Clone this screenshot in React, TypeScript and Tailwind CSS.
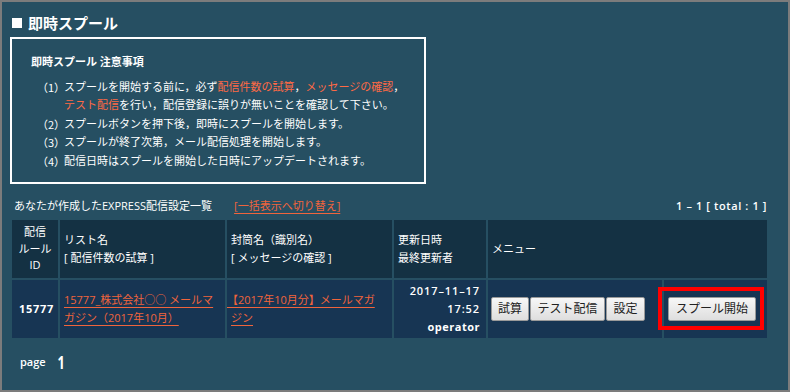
import React from "react";

const F = { fontFamily: '"Open Sans", "Noto Sans CJK JP", sans-serif' };

const R = ({ children }: { children: React.ReactNode }) => (
  <span className="text-[#ff6a45]">{children}</span>
);

const Btn = ({ children, className = "" }: { children: React.ReactNode; className?: string }) => (
  <div
    className={
      "h-[24px] flex items-center justify-center border border-[#9a9a9a] rounded-[2px] bg-gradient-to-b from-[#f7f7f7] to-[#dedede] text-[#222] text-[12px] leading-none " +
      className
    }
  >
    {children}
  </div>
);

export default function App() {
  const items: [string, React.ReactNode][] = [
    [
      "（1）",
      <>
        スプールを開始する前に，必ず<R>配信件数の試算</R>，<R>メッセージの確認</R>，
        <br />
        <R>テスト配信</R>を行い，配信登録に誤りが無いことを確認して下さい。
      </>,
    ],
    ["（2）", "スプールボタンを押下後，即時にスプールを開始します。"],
    ["（3）", "スプールが終了次第，メール配信処理を開始します。"],
    ["（4）", "配信日時はスプールを開始した日時にアップデートされます。"],
  ];
  const link = "text-[#f0643c] underline underline-offset-[3px] decoration-1";
  return (
    <div
      style={F}
      className="w-[790px] h-[392px] border-2 border-[#7c7c7c] bg-[#264f62] text-white text-[11px] flex flex-col"
    >
      <div className="pt-[11px] pl-[10px] h-[35px] flex items-start">
        <div className="h-[20px] flex items-center font-bold text-[15px] leading-[20px] gap-[6px]">
          <span className="w-[10px] h-[10px] bg-white inline-block"></span>
          <span>即時スプール</span>
        </div>
      </div>
      <div className="ml-[8px] w-[416px] h-[147px] border-2 border-white pl-[19px] pt-[14px]">
        <div className="font-bold leading-[18px]">即時スプール 注意事項</div>
        <div className="mt-[7px] pl-[6px]">
          {items.map(([n, t], i) => (
            <div key={i} className="flex leading-[18.4px]">
              <div className="w-[27px] shrink-0" style={{ fontFamily: '"Noto Sans CJK JP", sans-serif' }}>{n}</div>
              <div>{t}</div>
            </div>
          ))}
        </div>
      </div>
      <div className="mt-[13px] h-[18px] flex items-center pl-[12px] pr-[21px] leading-[18px]">
        <span>あなたが作成したEXPRESS配信設定一覧</span>
        <span className={"ml-[22px] " + link}>[一括表示へ切り替え]</span>
        <span className="ml-auto font-semibold tracking-[0.6px]">1 – 1 [ total : 1 ]</span>
      </div>
      <div className="mt-[5px] ml-[10px] grid grid-cols-[46px_165px_165px_92px_174px_103px] grid-rows-[58px_58px] gap-[2px] leading-[18px]">
        <div className="bg-[#143143] flex flex-col items-center justify-center leading-[16.5px]">
          <span>配信</span>
          <span>ルール</span>
          <span>ID</span>
        </div>
        <div className="bg-[#143143] flex flex-col justify-center pl-[4px]">
          <span>リスト名</span>
          <span>[ 配信件数の試算 ]</span>
        </div>
        <div className="bg-[#143143] flex flex-col justify-center pl-[4px]">
          <span>封筒名（識別名）</span>
          <span>[ メッセージの確認 ]</span>
        </div>
        <div className="bg-[#143143] flex flex-col justify-center pl-[4px]">
          <span>更新日時</span>
          <span>最終更新者</span>
        </div>
        <div className="col-span-2 bg-[#143143] flex items-center pl-[4px]">メニュー</div>

        <div className="bg-[#173553] flex items-center justify-end pr-[4px] font-bold tracking-[0.7px]">15777</div>
        <div className="bg-[#173553] flex items-center pl-[4px]">
          <span className={link}>
            15777_株式会社○○ メールマ
            <br />
            ガジン（2017年10月）
          </span>
        </div>
        <div className="bg-[#173553] flex items-center pl-[0px]">
          <span className={link}>
            【2017年10月分】メールマガ
            <br />
            <span className="pl-[4px]">ジン</span>
          </span>
        </div>
        <div className="bg-[#173553] flex flex-col justify-center items-end pr-[6px] font-semibold tracking-[0.9px]">
          <span>2017–11–17</span>
          <span>17:52</span>
          <span className="font-bold tracking-[0.5px]">operator</span>
        </div>
        <div className="bg-[#173553] flex items-center pl-[3px] gap-[1px]">
          <Btn className="w-[38px]">試算</Btn>
          <Btn className="w-[75px]">テスト配信</Btn>
          <Btn className="w-[39px]">設定</Btn>
        </div>
        <div className="bg-[#173553] relative flex items-center pl-[4px]">
          <Btn className="w-[88px]">スプール開始</Btn>
          <div className="absolute left-[-6px] top-[7px] w-[106px] h-[43px] border-4 border-[#ff0000]"></div>
        </div>
      </div>
      <div className="mt-[15px] pl-[18px] flex items-center h-[18px]">
        <span className="font-semibold">page</span>
        <span className="ml-[10px] inline-block font-bold text-[18px] leading-none scale-x-[0.7]">1</span>
      </div>
    </div>
  );
}
